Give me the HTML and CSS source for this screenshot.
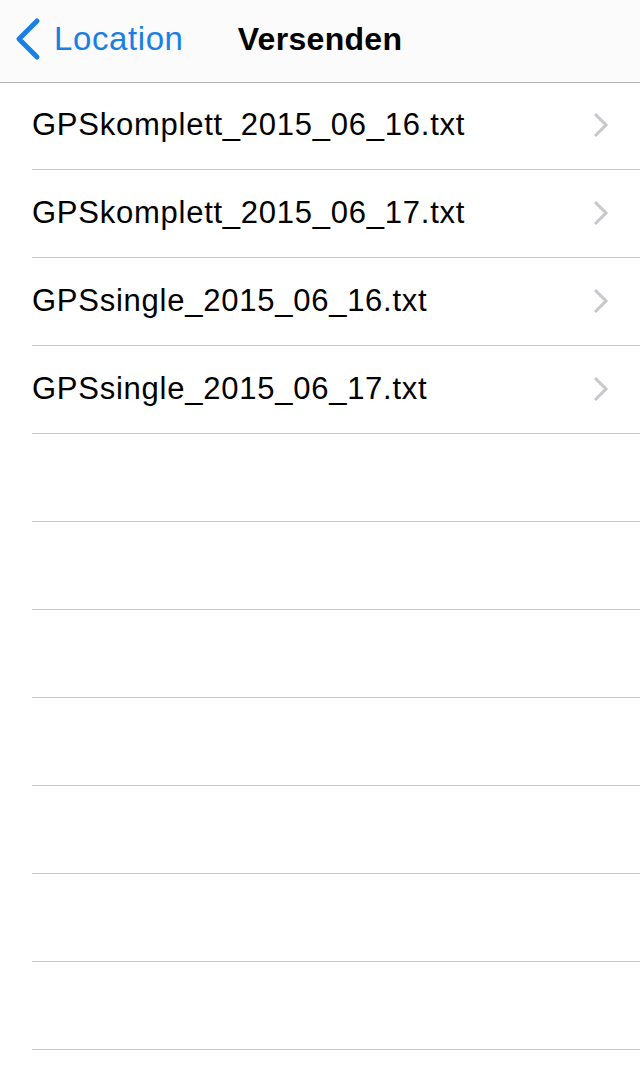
FILE: index.html
```html
<!DOCTYPE html>
<html>
<head>
<meta charset="utf-8">
<link rel="stylesheet" href="styles.css">
</head>
<body>
<header class="nav">
  <div class="back">
    <svg class="back-icon" width="30" height="44" viewBox="0 0 30 44"><polyline points="23,4 5,22 23,40" fill="none" stroke="#1a7fe3" stroke-width="5" stroke-linecap="round" stroke-linejoin="round"/></svg>
    <span class="back-label">Location</span>
  </div>
  <div class="title">Versenden</div>
</header>
<ul class="list">
  <li class="row"><span class="name">GPSkomplett_2015_06_16.txt</span><svg class="chev" width="16" height="26" viewBox="0 0 16 26"><polyline points="2,2 13,13 2,24" fill="none" stroke="#c7c7cc" stroke-width="3"/></svg></li>
  <li class="row"><span class="name">GPSkomplett_2015_06_17.txt</span><svg class="chev" width="16" height="26" viewBox="0 0 16 26"><polyline points="2,2 13,13 2,24" fill="none" stroke="#c7c7cc" stroke-width="3"/></svg></li>
  <li class="row"><span class="name">GPSsingle_2015_06_16.txt</span><svg class="chev" width="16" height="26" viewBox="0 0 16 26"><polyline points="2,2 13,13 2,24" fill="none" stroke="#c7c7cc" stroke-width="3"/></svg></li>
  <li class="row"><span class="name">GPSsingle_2015_06_17.txt</span><svg class="chev" width="16" height="26" viewBox="0 0 16 26"><polyline points="2,2 13,13 2,24" fill="none" stroke="#c7c7cc" stroke-width="3"/></svg></li>
  <li class="row empty"></li>
  <li class="row empty"></li>
  <li class="row empty"></li>
  <li class="row empty"></li>
  <li class="row empty"></li>
  <li class="row empty"></li>
  <li class="row empty"></li>
</ul>
</body>
</html>
```
FILE: styles.css
```css
html, body {
  margin: 0;
  padding: 0;
  background: #ffffff;
  font-family: "Liberation Sans", Arial, sans-serif;
}
.nav {
  position: relative;
  height: 82px;
  border-bottom: 1px solid #b2b2b2;
  display: flex;
  align-items: center;
  background: #fbfbfb;
}
.back {
  display: flex;
  align-items: center;
  padding-left: 14px;
  color: #1a7fe3;
  font-size: 33px;
  letter-spacing: 0.6px;
  margin-top: -4px;
}
.back-icon {
  margin-right: 10px;
}
.title {
  position: absolute;
  left: 0;
  right: 0;
  top: 0;
  bottom: 0;
  display: flex;
  align-items: center;
  justify-content: center;
  font-size: 32px;
  font-weight: bold;
  letter-spacing: 0.3px;
  color: #000;
  margin-top: -4px;
  pointer-events: none;
}
.list {
  list-style: none;
  margin: 0;
  padding: 0 0 0 32px;
}
.row {
  height: 87px;
  border-bottom: 1px solid #c8c7cc;
  display: flex;
  align-items: center;
  justify-content: space-between;
  padding-right: 31px;
}
.row:first-child {
  height: 86px;
}
.name {
  font-size: 31px;
  letter-spacing: 0.75px;
  color: #000;
  margin-top: -2px;
}
.chev {
  margin-top: -2px;
}
```
